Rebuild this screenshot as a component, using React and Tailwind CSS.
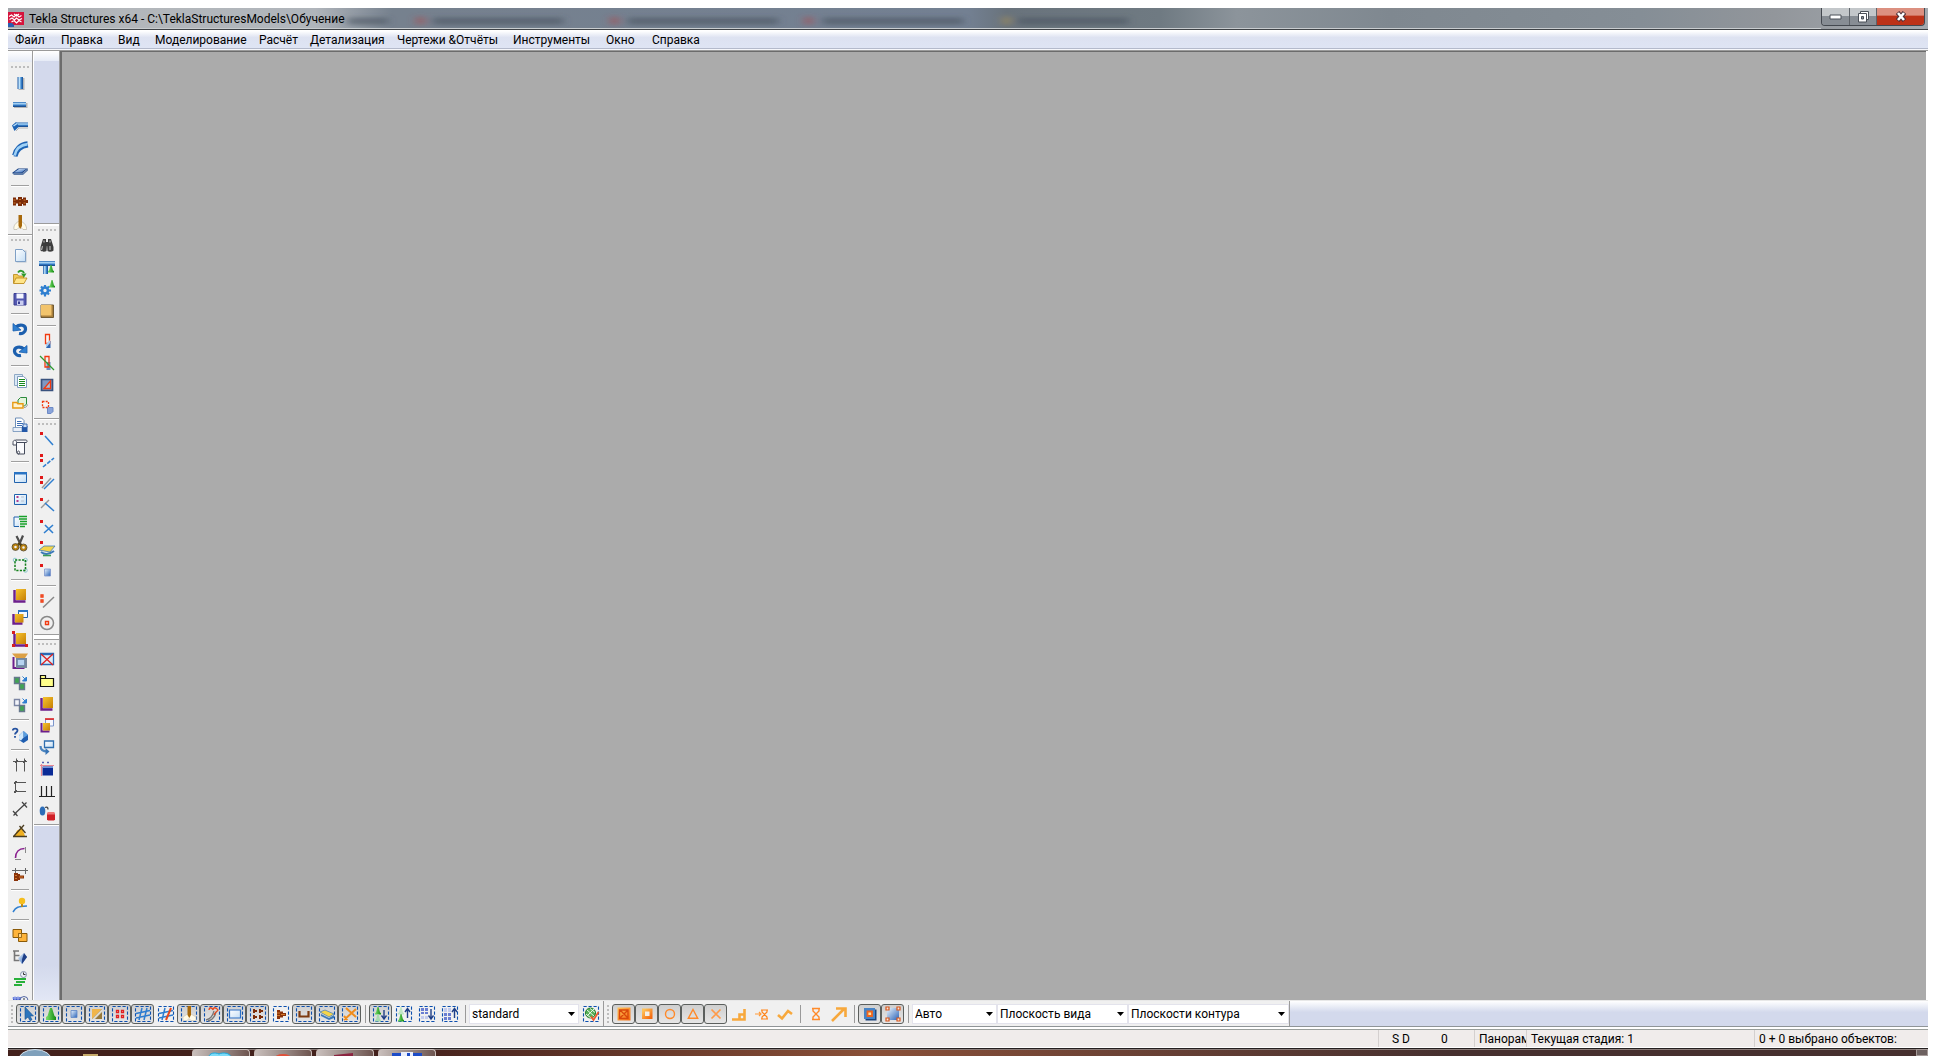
import React from "react";

const BLUE = "#2f7fd0";
const NAVY = "#1f3f86";

/* ---------- shared drawing pieces ---------- */

const Gradients = () => (
  <svg width="0" height="0" className="absolute" aria-hidden="true">
    <defs>
      <linearGradient id="steel" x1="0" x2="1" y1="0" y2="0">
        <stop offset="0" stopColor="#1d5aa6" />
        <stop offset="0.35" stopColor="#c3e6fc" />
        <stop offset="0.65" stopColor="#3f8ad2" />
        <stop offset="1" stopColor="#154a90" />
      </linearGradient>
      <linearGradient id="steelV" x1="0" x2="0" y1="0" y2="1">
        <stop offset="0" stopColor="#2468b4" />
        <stop offset="0.35" stopColor="#b9e0fb" />
        <stop offset="0.6" stopColor="#3a84cf" />
        <stop offset="1" stopColor="#123f80" />
      </linearGradient>
      <linearGradient id="gold" x1="0" x2="1" y1="0" y2="1">
        <stop offset="0" stopColor="#f7c52e" />
        <stop offset="1" stopColor="#c67f05" />
      </linearGradient>
      <linearGradient id="blueBox" x1="0" x2="1" y1="0" y2="1">
        <stop offset="0" stopColor="#eaf5fe" />
        <stop offset="1" stopColor="#2a63b8" />
      </linearGradient>
      <linearGradient id="paper" x1="0" x2="1" y1="0" y2="1">
        <stop offset="0" stopColor="#ffffff" />
        <stop offset="1" stopColor="#c4def5" />
      </linearGradient>
      <linearGradient id="greenCone" x1="0" x2="1" y1="0" y2="0">
        <stop offset="0" stopColor="#7be06a" />
        <stop offset="1" stopColor="#128a12" />
      </linearGradient>
      <linearGradient id="fire" x1="0" x2="1" y1="0" y2="1">
        <stop offset="0" stopColor="#ffc45a" />
        <stop offset="1" stopColor="#f4690f" />
      </linearGradient>
    </defs>
  </svg>
);

const Cone = ({ x = 0, y = 0, fill = "url(#greenCone)" }) => (
  <path transform={`translate(${x} ${y})`} d="M3.5 0h1l1.5 5.5 1 .5v1.5H1V6l1-.5z" fill={fill} />
);

const RedDots = ({ pair }) => (
  <g fill="#e01818">
    <path d="M1 1h3v3h-3z" />
    {pair && <path d="M1 6h3v3h-3z" />}
  </g>
);

const GoldPlate = () => (
  <g>
    <path d="M2.5 3v11.500h11" fill="none" stroke="#6c1f8c" strokeWidth="2.4" />
    <path d="M4 2h10v11H4z" fill="url(#gold)" />
  </g>
);

const Bolt = ({ x = 0, y = 0 }) => (
  <g transform={`translate(${x} ${y})`}>
    <path d="M0 0h3v9H0zM3 1.500h3v6H3zM6 3h3v3H6z" fill="#8a3208" />
    <path d="M0 3h3M0 5.500h3M4 4.500h4" stroke="#d0782c" strokeWidth="1" />
  </g>
);

const Glass = ({ x, y }) => (
  <path
    transform={`translate(${x} ${y})`}
    d="M0 0h7M0 9h7M1 0v2L6 7v2M6 0v2L1 7v2"
    fill="none"
    stroke="#ff8418"
    strokeWidth="1.2"
  />
);

const DashBox = () => (
  <path d="M.5 .5h15v15H.5z" fill="none" stroke="#0b4fae" strokeWidth="1.1" strokeDasharray="3.2 1.8" />
);

/* ---------- icon drawings, 16 x 16 ---------- */

const icons = {
  column: (
    <g>
      <path d="M6.5 3h6v12h-6z" fill="#b5b5b5" />
      <path d="M5.5 2h5.5v12h-5.500z" fill="url(#steel)" />
    </g>
  ),
  beam: (
    <g>
      <path d="M2 6h13.500v5H2z" fill="#b5b5b5" />
      <path d="M1 5h13v5H1z" fill="url(#steelV)" />
    </g>
  ),
  polybeam: (
    <g>
      <path d="M6 9h10M4 12l3-3" stroke="#b5b5b5" />
      <path d="M4 3.500h12v4.500H6z" fill="url(#steelV)" />
      <path d="M0 6.500L4 3l3 4.500-4.500 4.500z" fill="#1d63b4" />
      <path d="M1.500 7L5 4.500" stroke="#b9e0fb" strokeWidth="1.500" />
    </g>
  ),
  curved: (
    <g fill="none">
      <path d="M3.500 15.500C4.500 9.500 9 5.500 16 4.500" stroke="#1d63b4" strokeWidth="4" />
      <path d="M2.500 14.500C3.500 8.500 8 4 15.500 3" stroke="#9fd2f7" strokeWidth="3" />
      <path d="M.8 14C2 7.500 7 2 15.500 1" stroke="#1d63b4" strokeWidth="1.300" />
    </g>
  ),
  plate: (
    <g>
      <path d="M0 10L6 5.500h10L10.500 10z" fill="#173f82" />
      <path d="M2 9.500L7 6h7L9.500 9.500z" fill="url(#blueBox)" />
      <path d="M0 10h10.500L16 5.500v2L11 12H2z" fill="#5f7ca8" />
    </g>
  ),
  bolts: (
    <g fill="#7c2c08">
      <path d="M1 4.500h3v8H1zM4 6.500h2v4H4zM6 4h4v9H6zM10 6h1v5h-1zM11 4.500h3v8h-3zM14 7h2v3h-2z" />
      <path d="M1.500 7h2M1.500 10h2M7 6.500h2M7 10h2M11.500 7h2M11.500 10h2" stroke="#d0782c" />
    </g>
  ),
  weld: (
    <g>
      <path d="M8 6C4 7 1 11 2 14.500h3l3-3 3 3h3.500C15 11 12 7 8 6z" fill="#fffbe9" stroke="#b9b4a6" strokeWidth=".7" />
      <path d="M6.500 0h3.500v11L8.200 14 6.500 11z" fill="#a8690a" />
    </g>
  ),
  newDoc: (
    <g>
      <path d="M4.500 3.500h10v12h-10z" fill="#b9c3ce" />
      <path d="M3.500 2.500h7l3 3v9h-10z" fill="url(#paper)" stroke="#7fa0c6" />
    </g>
  ),
  open: (
    <g>
      <path d="M1.500 5.500h4l1 1.500h5V14h-10z" fill="#f2ca55" stroke="#b98618" strokeWidth=".8" />
      <path d="M4 9H15l-3 5.500H1.500z" fill="#ffe58a" stroke="#b98618" strokeWidth=".8" />
      <path d="M6 3.500C8 1 11 1.500 12 4" fill="none" stroke="#2d9a2d" strokeWidth="2" />
      <path d="M9 4.500h5.500L12 8.500z" fill="#2d9a2d" />
    </g>
  ),
  save: (
    <g>
      <path d="M2 2.500h12v11.500H2z" fill="#5358b0" stroke="#3a3f92" />
      <path d="M4.500 2.500h7v5h-7z" fill="#f3f5ff" />
      <path d="M5 9.500h6.500V14H5z" fill="#c9cdf0" />
      <path d="M6 10.500h2V13H6z" fill="#3a3f92" />
    </g>
  ),
  undo: (
    <g fill="none" stroke="#1c5fae">
      <path d="M4 6C8 2.500 14 4 13.500 8.500 13.200 11.500 10 13 7 12.500" strokeWidth="3.200" />
      <path d="M1 2.500v7.500l8-1z" fill="#2f7fd0" strokeWidth=".8" />
    </g>
  ),
  redo: (
    <g fill="none" stroke="#1c5fae">
      <path d="M12 6C8 2.500 2 4 2.500 8.500 2.800 11.500 6 13 9 12.500" strokeWidth="3.200" />
      <path d="M15 2.500v7.500l-8-1z" fill="#2f7fd0" strokeWidth=".8" />
    </g>
  ),
  docList: (
    <g>
      <path d="M2.500 1.500h8v11h-8z" fill="#dbe9f6" stroke="#8fa9c6" />
      <path d="M5.500 3.500h6l3 2.500v8.500h-9z" fill="#fff" stroke="#7f9cbc" />
      <path d="M7 6.500h6M7 8.500h6M7 10.500h6M7 12.500h6" stroke="#17891c" strokeWidth="1.200" />
    </g>
  ),
  folders: (
    <g>
      <path d="M6 5l2.500-2.500h6V9l-2 2H6z" fill="#e3f4dc" stroke="#2c8a3c" />
      <path d="M.8 7.500h4l1 1.200H11V13H.8z" fill="#fff3cf" stroke="#e79a12" strokeWidth="1.400" />
      <path d="M12 12.500c2 0 3-1 3.500-3" stroke="#999" fill="none" />
    </g>
  ),
  printDoc: (
    <g>
      <path d="M3.500 1h6l2.500 2.500v9h-8.500z" fill="#fff" stroke="#6f8fb8" />
      <path d="M5 4.500h4.500M5 6.500h6M5 8.500h5" stroke="#3d6db3" />
      <path d="M1 10.500h9v4H1z" fill="#e8eef7" stroke="#6f8fb8" strokeWidth=".8" />
      <path d="M10 9h5.500v6H10z" fill="#2358a8" />
      <path d="M11 7h4v3.500h-4z" fill="#cfe0f3" stroke="#2358a8" strokeWidth=".8" />
    </g>
  ),
  scroll: (
    <g fill="#fbfbfd" stroke="#444a5a">
      <path d="M4.500 3.500h10c1-1 .5-2.500-.5-2.500H3.500M4.500 3.500V12c0 1 .3 3 1.500 3h6.500V3.500" />
      <path d="M1 3.500c0-3 3.500-3 3.500 0v2.500H1z" />
      <path d="M6.500 15c1.500 0 1.500-3 0-3S5 15 6.500 15" fill="none" />
    </g>
  ),
  window: (
    <g>
      <path d="M2.500 3.500h12v10h-12z" fill="url(#paper)" stroke="#2062ad" />
      <path d="M2 3h13v2.500H2z" fill="#2a74c4" />
    </g>
  ),
  windowDots: (
    <g>
      <path d="M2.500 3.500h12v10h-12z" fill="url(#paper)" stroke="#2062ad" />
      <path d="M4.500 5h2v2h-2zM4.500 9h2v2h-2z" fill="#b03a8c" />
      <path d="M9 6h3M9 10h3" stroke="#b4bfce" />
    </g>
  ),
  windowList: (
    <g>
      <path d="M2 4h9v9.500H2z" fill="url(#paper)" stroke="#2062ad" />
      <path d="M7 2.500h9v12H7z" fill="#f0f0f0" />
      <path d="M7 3.500h8M7 6h8M8 8.500h7M8 11h7M8 13.500h5" stroke="#17a02a" strokeWidth="1.300" />
    </g>
  ),
  scissors: (
    <g fill="none">
      <path d="M4.500 1L9 10M11 .5L7 10" stroke="#4c4c4c" strokeWidth="2.200" />
      <path d="M6 8l4 3" stroke="#5a420c" strokeWidth="2" />
      <circle cx="3.500" cy="12" r="2.300" stroke="#b8800c" strokeWidth="2" />
      <circle cx="11.500" cy="12.500" r="2.300" stroke="#b8800c" strokeWidth="2" />
      <circle cx="3.500" cy="12" r="3.500" stroke="#3c2c0c" strokeWidth=".7" />
      <circle cx="11.500" cy="12.500" r="3.500" stroke="#3c2c0c" strokeWidth=".7" />
    </g>
  ),
  dashedRegion: (
    <g fill="none">
      <circle cx="3" cy="3" r="1.800" stroke="#8fc8d0" />
      <circle cx="13.500" cy="13.500" r="1.800" stroke="#8fc8d0" />
      <circle cx="13.500" cy="3" r="1.800" stroke="#8fc8d0" />
      <path d="M3 3h10.500v10.500H3z" stroke="#13801a" strokeWidth="1.500" strokeDasharray="2.200 1.300" />
    </g>
  ),
  goldPlate: <GoldPlate />,
  goldWindow: (
    <g>
      <path d="M1.500 5v9.500h9" fill="none" stroke="#6c1f8c" strokeWidth="2.400" />
      <path d="M6.500 1.500h9v7h-9z" fill="#f4f9ff" stroke="#2062ad" />
      <path d="M6 1h10v2H6z" fill="#2a74c4" />
      <path d="M3 5h8.500v8.500H3z" fill="url(#gold)" />
    </g>
  ),
  goldNodes: (
    <g>
      <GoldPlate />
      <path d="M0 0h3v3H0zM0 13h3v3H0zM13 13h3v3h-3z" fill="#d81e1e" />
    </g>
  ),
  goldFrame: (
    <g>
      <path d="M1.500 4v11h11" fill="none" stroke="#6c1f8c" strokeWidth="2" />
      <path d="M0 .5h16l-3 4.500H4z" fill="#dca045" />
      <path d="M4 5h11v10H4z" fill="#76879c" />
      <path d="M5.500 6.500h7v6h-7z" fill="#b7d3f0" stroke="#5c7aa0" strokeWidth=".6" />
    </g>
  ),
  copyGreen: (
    <g>
      <path d="M2.500 2.500h5v6h-5z" fill="#3fa452" stroke="#66788c" strokeWidth="1.400" />
      <path d="M7.500 8.500h5v6h-5z" fill="#3fa452" stroke="#66788c" strokeWidth="1.400" />
      <path d="M10.500 1.500l3 3M14.500 2v4h-4z" stroke={BLUE} fill={BLUE} />
    </g>
  ),
  moveGreen: (
    <g>
      <path d="M2.500 2.500h5v6h-5z" fill="#f4f5fa" stroke="#7c86a4" strokeWidth="1.400" />
      <path d="M7.500 8.500h5v6h-5z" fill="#3fa452" stroke="#66788c" strokeWidth="1.400" />
      <path d="M10.500 1.500l3 3M14.500 2v4h-4z" stroke={BLUE} fill={BLUE} />
    </g>
  ),
  inquire: (
    <g>
      <path d="M.8 3.500C.8 1 5.500 1 5.500 3.500 5.500 5.500 3 5.500 3 7.500M3 9v1.800" fill="none" stroke="#2552a0" strokeWidth="1.800" />
      <path d="M7 8.500L11.500 4 16 8v5l-4.500 3L7 13z" fill="#1f5eb0" />
      <path d="M7 8.500L11.500 4v6.500L9 13.500l-2-1z" fill="#cfe8fb" />
      <path d="M11.500 4L16 8l-4 2.500z" fill="#5a9fe0" />
    </g>
  ),
  dimX: (
    <g stroke="#555" fill="none">
      <path d="M1 4.500h14M4.500 1.500v13M12.500 1.500v13" />
      <path d="M3 6l3-3M11 6l3-3" />
    </g>
  ),
  dimY: (
    <g stroke="#555" fill="none">
      <path d="M3.500 2v12M2 3.500h12M2 12.500h12" />
      <path d="M2 5l3-3M2 14l3-3" />
    </g>
  ),
  dimFree: (
    <g stroke="#444" fill="none">
      <path d="M3 12.500L12.500 3.500M1 10l4.500 5M10 1l5 5.500M11 5l3.500-3.500M1.500 14.500l3-3" strokeWidth="1.200" />
    </g>
  ),
  angle: (
    <g>
      <path d="M5 7.500l5-2.500L13 13H2.500z" fill="#f0b020" />
      <path d="M1 13.500h14M1.500 13.500L12 2M7.500 3l6 7" stroke="#4a3c20" fill="none" strokeWidth="1.300" />
    </g>
  ),
  arcDim: (
    <g fill="none">
      <path d="M3.500 13C3.500 7 7 3.500 12.500 3.500" stroke="#8a1f8f" strokeWidth="1.600" />
      <path d="M13.500 2v6M3 14.500h6" stroke="#888" />
    </g>
  ),
  boltDim: (
    <g>
      <path d="M0 3.500h16M3.500 1v13M13.500 1v6" stroke="#666" fill="none" />
      <path d="M2 6h4v8H2zM6 7h2v6H6zM8 8.500h4v3H8z" fill="#8a3208" />
      <path d="M3 8.500h2M3 11.500h2M7 10h4" stroke="#d0782c" />
    </g>
  ),
  pin: (
    <g>
      <path d="M1 15c3-5 5-5.500 14-6" stroke={BLUE} strokeWidth="1.500" fill="none" />
      <path d="M9 6h2v4H9z" fill="#b98618" />
      <circle cx="10" cy="4" r="3.200" fill="#f5be1d" />
    </g>
  ),
  overlap: (
    <g stroke="#8a5a08">
      <path d="M1 2.500h8.500v8H1z" fill="#ffb43a" />
      <path d="M6.500 6.500h8.500v8H6.500z" fill="#ffb43a" />
      <path d="M6.500 6.500h3v4h-3z" fill="#ffd890" strokeWidth=".8" />
    </g>
  ),
  tree: (
    <g>
      <path d="M1 2h6M2.500 2v9.500h5M2.500 6.500h5" stroke="#777" strokeWidth="1.600" fill="none" />
      <path d="M6 9l6-5 3 4-5 7z" fill="url(#blueBox)" />
      <path d="M12 4l3 4-5 7v-4.500z" fill={NAVY} />
    </g>
  ),
  schedule: (
    <g>
      <path d="M2 8h12M4 11h9M2 14h8" stroke="#28b03a" strokeWidth="2" />
      <circle cx="11.500" cy="3.500" r="3" fill="#edf1f8" stroke="#8a94ad" />
      <path d="M11.500 1.500v2h2" stroke="#333" fill="none" />
    </g>
  ),
  filmClock: (
    <g>
      <path d="M1 4h8v7H1z" fill="#3c55c8" />
      <path d="M0 5h9M3 3v9M6 3v9" stroke="#a4b4ee" />
      <circle cx="12" cy="7.500" r="4" fill="#edf1f8" stroke="#5568a0" />
      <path d="M12 5v2.500h2" stroke="#333" fill="none" />
    </g>
  ),
  binoculars: (
    <g fill="#3d3d3d">
      <path d="M4 2h3v3l1 2-.5 7C6 15 3 15 1.500 13.500V10z" />
      <path d="M12 2H9v3L8 7l.5 7c1.500 1 4.500 1 6-.5V10z" />
      <path d="M6.500 5h3v4h-3z" />
      <path d="M3.500 9l-1 4M11 9v4M5 3.500v2M11 3.500v2" stroke="#b4b4b4" strokeWidth="1.200" />
    </g>
  ),
  frameCone: (
    <g>
      <path d="M0 2h16v5H0z" fill="url(#steelV)" />
      <path d="M4 7h5v8H4z" fill="url(#steel)" />
      <Cone x={8} y={6} />
    </g>
  ),
  gearCone: (
    <g>
      <circle cx="6" cy="9.500" r="3" fill="none" stroke="#2f7fd0" strokeWidth="2.600" />
      <path d="M6 4v2M6 13v2.500M.5 9.500h2M9.500 9.500h2.500M2 5.500L3.500 7M8.500 12l1.500 1.500M10 5.500L8.500 7M2 13.500L3.500 12" stroke="#2f7fd0" strokeWidth="2.200" />
      <Cone x={9} y={-1} />
    </g>
  ),
  goldTile: (
    <g>
      <path d="M2 2h12.500v12.500H2z" fill="#a87f3c" stroke="#6f5a34" />
      <path d="M2 2h10.500v10.500H2z" fill="#f2c46c" />
    </g>
  ),
  columnRed: (
    <g>
      <path d="M7 8h4.500v7H7z" fill="#2d66b4" />
      <path d="M6.500 1.500h4v9h-4z" fill="#f4f4f4" stroke="#f03a10" strokeWidth="1.300" />
      <path d="M7 15V11l4-4v3z" fill="#a8cdf0" />
    </g>
  ),
  columnCut: (
    <g fill="none">
      <path d="M7.500 7h4v8h-4z" fill="#6c8cc0" />
      <path d="M6 1.500h4V12H6z" stroke="#f03a10" strokeWidth="1.300" />
      <path d="M1 1l14 14" stroke="#2f9a2f" strokeWidth="1.300" />
    </g>
  ),
  redTriangle: (
    <g>
      <path d="M2.500 2.500h11v11h-11z" fill="#7f98c2" stroke="#39527e" strokeWidth="1.700" />
      <path d="M5 11.500L11.500 4v7.500z" fill="#a9bddb" stroke="#f03a10" strokeWidth="1.300" />
    </g>
  ),
  dashedRed: (
    <g>
      <path d="M8.500 8.500h5.500V12.500l-2 2H8.500z" fill="#8aa4da" stroke="#6d8ac6" />
      <path d="M3.500 2.500h6v6h-6z" fill="#f4f4f4" stroke="#f03a10" strokeWidth="1.300" strokeDasharray="2 1.200" />
    </g>
  ),
  ptLine: (
    <g>
      <RedDots />
      <path d="M6 5l8 9" stroke={BLUE} strokeWidth="1.500" />
    </g>
  ),
  ptDash: (
    <g>
      <RedDots pair />
      <path d="M4 14l11-9" stroke={BLUE} strokeWidth="1.600" strokeDasharray="4 1.500" />
    </g>
  ),
  ptParallel: (
    <g>
      <RedDots pair />
      <path d="M3 13L12 3" stroke="#999" strokeWidth="1.500" />
      <path d="M5 14L15 4" stroke={BLUE} strokeWidth="1.500" />
    </g>
  ),
  ptCross: (
    <g>
      <RedDots />
      <path d="M2 11l8-8" stroke="#999" strokeWidth="1.500" />
      <path d="M6 6l9 8" stroke={BLUE} strokeWidth="1.500" />
    </g>
  ),
  ptX: (
    <g>
      <RedDots />
      <path d="M5 14l9-8M6 6l8 8" stroke={BLUE} strokeWidth="1.600" />
    </g>
  ),
  ptPlane: (
    <g>
      <path d="M0 9l5-4h11l-5 6z" fill="#f5d548" stroke="#3b79b8" strokeWidth=".8" />
      <path d="M2 11c4 3 9 2 13-1" stroke="#3b79b8" strokeWidth="2" fill="none" />
      <path d="M4 14.500h8" stroke="#3b9a58" strokeWidth="1.600" />
      <path d="M1 0h3v3h-3z" fill="#e01818" />
    </g>
  ),
  ptBox: (
    <g>
      <path d="M1 1h3v3h-3z" fill="#e01818" />
      <path d="M5.500 6h6v7h-6z" fill="url(#blueBox)" stroke="#7d96cb" strokeWidth=".8" />
    </g>
  ),
  conLine: (
    <g fill="none">
      <path d="M4 14.500L15 4" stroke="#888" strokeWidth="1.500" />
      <path d="M2 2h2v2H2zM2 7h2v2H2z" stroke="#f03a10" strokeWidth="1.300" />
    </g>
  ),
  conCircle: (
    <g fill="none">
      <circle cx="8" cy="8" r="6.500" stroke="#888" strokeWidth="1.500" />
      <path d="M6.500 6.500h3v3h-3z" stroke="#f03a10" strokeWidth="1.400" />
    </g>
  ),
  noWindow: (
    <g>
      <path d="M1.500 2.500h13v11h-13z" fill="#dcebf8" stroke="#2a6ab4" strokeWidth="1.300" />
      <path d="M1.500 3.200h13" stroke="#2a6ab4" strokeWidth="2" />
      <path d="M2 3l12 11M14 3L2 14" stroke="#e02020" strokeWidth="1.300" />
    </g>
  ),
  folderYellow: (
    <g fill="#ffff8a" stroke="#111" strokeWidth="1.200">
      <path d="M1.500 5.500h13v8h-13z" />
      <path d="M1.500 5.500v-3h5v3z" />
    </g>
  ),
  goldRedWin: (
    <g>
      <path d="M2.500 6v8.500h8" fill="none" stroke="#6c1f8c" strokeWidth="2" />
      <path d="M6.500 2.500h8v6.500h-8z" fill="#f6f8ff" stroke="#7d96cb" />
      <path d="M6 2h9" stroke="#e02020" strokeWidth="1.600" />
      <path d="M4 6h7v7.500H4z" fill="url(#gold)" />
    </g>
  ),
  swapWin: (
    <g>
      <path d="M5.500 2h9v6.500h-9z" fill="url(#paper)" stroke="#2f6fb0" strokeWidth="1.300" />
      <path d="M1.500 7c0 4 3 5.500 7 5.500" fill="none" stroke="#4b84be" strokeWidth="2.200" />
      <path d="M6.500 9l4 3.500-4 3.500z" fill="#3774b5" />
    </g>
  ),
  navyWin: (
    <g>
      <path d="M3.500 5.500h10.500v9h-10.500z" fill="#0b2b96" />
      <path d="M1 4.500h14M2.500 3v12" stroke="#e78795" strokeWidth="1.200" />
      <path d="M3 1.500h2M8 1.500h2" stroke="#5560b0" strokeWidth="1.500" />
      <path d="M4 6.500h10" stroke="#6f92e0" />
    </g>
  ),
  grid: <path d="M2.500 3v10M7.500 3v10M12.500 3v10M0 13.500h16" stroke="#222" strokeWidth="1.200" />,
  cylinders: (
    <g>
      <ellipse cx="3.500" cy="6" rx="2.800" ry="4.500" fill="#2d6db8" />
      <path d="M6 2.500c2-1 3 0 3 2" stroke="#444" fill="none" strokeWidth="1.300" />
      <path d="M8 8h8v6.500l-1 1H9l-1-1z" fill="#cf2027" />
      <path d="M8 8l1-1h6l1 1v1.500H8z" fill="#ee7a7a" />
    </g>
  ),

  /* selection switches */
  selArrow: (
    <path d="M5 1l8.500 9H10l2 3.700-2 1-2-3.700-3 2.500z" fill="#2b75bd" stroke="#17518f" strokeWidth=".6" />
  ),
  selCone: <path d="M7 2h2l2.500 8 1.500 1v3h-10v-3l1.500-1z" fill="url(#greenCone)" />,
  selCube: <path d="M5 4.500h6v7H5z" fill="url(#blueBox)" stroke="#5d86c8" strokeWidth=".8" />,
  selSurface: (
    <g>
      <path d="M3 3h10v10H3z" fill="#6b5a3a" />
      <path d="M3 3h10L3 13z" fill="#f0b548" />
      <path d="M3 13L13 3v10z" fill="#dfdacb" />
      <path d="M6 13l7-7v7z" fill="#96783a" />
    </g>
  ),
  selPoints: (
    <path d="M4.500 4.500h2v2h-2zM9.500 4.500h2v2h-2zM4.500 9.500h2v2h-2zM9.500 9.500h2v2h-2z" fill="#fff" stroke="#e02020" strokeWidth="1.300" />
  ),
  selGrid: <path d="M1 7.500l14-3M1 12l14-3M7 2L4 14M12 2L9 14" stroke="#2c7cd0" strokeWidth="1.500" />,
  selGridLine: (
    <g>
      <path d="M1 7.500l14-3M1 12l14-3M7 2L4 14" stroke="#2c7cd0" strokeWidth="1.500" />
      <path d="M13 2L8 14" stroke="#e8481c" strokeWidth="2" />
    </g>
  ),
  selWeld: (
    <g>
      <path d="M8 7L2 11v3.500h4l2-2 2 2h5v-3.500z" fill="#fffbe9" stroke="#c9c3b2" strokeWidth=".6" />
      <path d="M6.500 0H10v9l-1.700 3-1.800-3z" fill="#a8690a" />
    </g>
  ),
  selRebar: (
    <g fill="none" strokeWidth="1.300">
      <path d="M2 14c5-1 7-5 8-9M4 15c5-1 7-5 8-9" stroke="#777" />
      <path d="M5 4c0-3 3-3 4 0M9 4c0-3 3-3 5 0-1 2-3 2-4 5" stroke="#e8481c" />
    </g>
  ),
  selPour: <path d="M2.500 4h11v8h-11z" fill="url(#paper)" stroke="#2c6fc4" strokeWidth="1.200" />,
  selBolts: (
    <path
      d="M3 3h2v4H3zM5 4h2v2H5zM9 3h2v4H9zM11 4h2v2h-2zM3 9h2v4H3zM5 10h2v2H5zM9 9h2v4H9zM11 10h2v2h-2z"
      fill="#7c2c08"
    />
  ),
  selBolt: <Bolt x={4} y={4} />,
  selStirrup: <path d="M3.500 5v5.500h9V5" fill="none" stroke="#7c3a10" strokeWidth="2.200" />,
  selLayers: (
    <g>
      <path d="M2 8l8 4 5-3v3l-5 2-8-4z" fill="#3b79b8" />
      <path d="M1 6l5-2 9 4-5 3z" fill="#f5d548" stroke="#3b79b8" strokeWidth=".7" />
    </g>
  ),
  selDistance: (
    <path d="M2 14L14 3M4 2l10 9M2 10l3.500 4" stroke="#f08c1c" strokeWidth="2" fill="none" />
  ),
  lvlConeDown: (
    <g>
      <Cone x={1} y={1} />
      <Cone x={1} y={8} fill="#a9dcb0" />
      <path d="M11 4v8M8.500 9.500L11 13l2.500-3.500" stroke={NAVY} strokeWidth="1.400" fill="none" />
    </g>
  ),
  lvlConeUp: (
    <g>
      <Cone x={1} y={1} fill="#bfe6c4" />
      <Cone x={1} y={8} />
      <path d="M11.500 12V3M9 6l2.500-3.500L14 6" stroke={NAVY} strokeWidth="1.400" fill="none" />
    </g>
  ),
  lvlBoxDown: (
    <g>
      <path d="M2 2h3v3H2zM6 2h3v3H6zM2 6h3v2H2zM6 6h3v2H6z" fill="#6a7ed2" />
      <path d="M2 10h3v3H2zM6 10h3v3H6z" fill="#c3cbee" />
      <path d="M12 3v9M9.500 9.500L12 13l2.500-3.500" stroke={NAVY} strokeWidth="1.400" fill="none" />
    </g>
  ),
  lvlBoxUp: (
    <g>
      <path d="M2 2h3v4H2zM6 2h3v4H6z" fill="#c3cbee" />
      <path d="M2 7h3v3H2zM6 7h3v3H6zM2 11h3v3H2zM6 11h3v3H6z" fill="#6a7ed2" />
      <path d="M12.500 12V3M10 6l2.500-3.500L15 6" stroke={NAVY} strokeWidth="1.400" fill="none" />
    </g>
  ),
  filter: (
    <g fill="none">
      <circle cx="7.500" cy="7" r="5" fill="#58b058" stroke="#1e7a28" />
      <path d="M4 4l7 6M3 8l5 4M7 2.500l5 4M11 3L4 10" stroke="#e8f6e8" />
      <path d="M8 10.500l2.500 3.500L15.500 6" stroke="#f0582c" strokeWidth="1.700" />
    </g>
  ),

  /* snap switches */
  snapPoints: (
    <g>
      <path d="M1.500 1.500h13v13h-13z" fill="url(#fire)" />
      <path d="M3.500 4h8.500v8.500H3.500zM4 4l8 8M12 4l-8 8" fill="none" stroke="#d9480a" strokeWidth="1.400" />
    </g>
  ),
  snapEnd: <path d="M4.500 4h7.500v7.500H4.500z" fill="#f3efe8" stroke="url(#fire)" strokeWidth="3" />,
  snapCenter: <circle cx="8" cy="8" r="4.500" fill="none" stroke="#ff8a2a" strokeWidth="1.400" />,
  snapMid: <path d="M8 3.500L12.700 12.300H3.300z" fill="none" stroke="#ff8a2a" strokeWidth="1.400" />,
  snapCross: <path d="M3.500 3.500l9 9M12.500 3.500l-9 9" stroke="#ff9a48" strokeWidth="1.700" />,
  snapPerp: <path d="M1 13.500h12.500V3M8.500 13V8.500h5" fill="none" stroke="#f7a83c" strokeWidth="2.600" />,
  snapExt: (
    <g>
      <path d="M1 8h6M5 6l2 2-2 2" fill="none" stroke="#ff9a38" strokeWidth="1.200" />
      <Glass x={7} y={4} />
    </g>
  ),
  snapAny: <path d="M1 9l4 3.500L11 5l4 3" fill="none" stroke="#f7a83c" strokeWidth="2.600" />,
  snapNear: (
    <path
      d="M4 2.500h8M4 13.500h8M5 3v2l6 6v2.500M11 3v2l-6 6v2.500"
      fill="none"
      stroke="#ff8a2a"
      strokeWidth="1.400"
    />
  ),
  snapLine: <path d="M1 15L13 3M5 2.500h9.500V11" fill="none" stroke="#f7a83c" strokeWidth="2.600" />,
  snapGeom: (
    <g>
      <path d="M3.500 3.500h11v11h-11z" fill="#1b437c" />
      <path d="M2 2h11v11H2z" fill="#4683c6" />
      <path d="M5.500 5.500h4.500v4.500H5.500z" fill="#ffe2a0" stroke="#f0641c" strokeWidth="1.800" />
    </g>
  ),
  snapRef: (
    <g>
      <path d="M2 2h12v12H2z" fill="url(#blueBox)" />
      <path d="M1 1h3v3H1zM12 1h3v3h-3zM1 12h3v3H1zM12 12h3v3h-3z" fill="#f4e6dc" stroke="#d8561c" strokeWidth="1.200" />
    </g>
  ),
};

const Icon = ({ name, dashed }) => (
  <svg width="16" height="16" viewBox="0 0 16 16" className="shrink-0 overflow-visible" aria-hidden="true">
    {dashed && <DashBox />}
    {icons[name]}
  </svg>
);

/* ---------- toolbars ---------- */

const GripRow = ({ tall }) => (
  <div
    className={
      tall
        ? "flex h-2.5 shrink-0 items-center justify-center gap-0.5"
        : "flex h-2 shrink-0 items-center justify-center gap-0.5"
    }
  >
    {[0, 1, 2, 3, 4].map((i) => (
      <span key={i} className="size-0.5 bg-[#bdbdbd]" />
    ))}
  </div>
);

const VerticalTool = ({ name, label }) => (
  <button type="button" aria-label={label} className="flex h-[22px] w-full shrink-0 items-center justify-center">
    <Icon name={name} />
  </button>
);

const VerticalBar = ({ items, tallGrip, flush }) => (
  <div
    role="toolbar"
    aria-orientation="vertical"
    className={
      flush
        ? "flex shrink-0 flex-col bg-[#f0f0f0]"
        : "flex shrink-0 flex-col border-b border-[#9c9c9c] bg-[#f0f0f0] shadow-[0_1px_0_#ffffff]"
    }
  >
    <GripRow tall={tallGrip} />
    {items.map(([name, label], i) =>
      name === "|" ? (
        <div key={i} className="flex h-2 shrink-0 items-center px-[3px]">
          <div className="h-0.5 w-full border-t border-[#a0a0a0] bg-white" />
        </div>
      ) : (
        <VerticalTool key={i} name={name} label={label} />
      )
    )}
  </div>
);

const createBar = [
  ["column", "Колонна"],
  ["beam", "Балка"],
  ["polybeam", "Составная балка"],
  ["curved", "Изогнутая балка"],
  ["plate", "Пластина"],
  ["|"],
  ["bolts", "Болты"],
  ["weld", "Сварка"],
];

const standardBar = [
  ["newDoc", "Создать"],
  ["open", "Открыть"],
  ["save", "Сохранить"],
  ["|"],
  ["undo", "Отменить"],
  ["redo", "Вернуть"],
  ["|"],
  ["docList", "Отчёты"],
  ["folders", "Список чертежей"],
  ["printDoc", "Печать чертежей"],
  ["scroll", "Макросы"],
  ["|"],
  ["window", "Вид"],
  ["windowDots", "Вид по двум точкам"],
  ["windowList", "Список видов"],
  ["scissors", "Плоскость отсечения"],
  ["dashedRegion", "Рабочая область"],
  ["|"],
  ["goldPlate", "Рабочая плоскость"],
  ["goldWindow", "Рабочая плоскость вида"],
  ["goldNodes", "Рабочая плоскость по точкам"],
  ["goldFrame", "Рабочая плоскость детали"],
  ["copyGreen", "Копировать"],
  ["moveGreen", "Переместить"],
  ["|"],
  ["inquire", "Запросить объект"],
  ["|"],
  ["dimX", "Размер по X"],
  ["dimY", "Размер по Y"],
  ["dimFree", "Свободный размер"],
  ["angle", "Угол"],
  ["arcDim", "Дуга"],
  ["boltDim", "Расстояние между болтами"],
  ["|"],
  ["pin", "Точка"],
  ["|"],
  ["overlap", "Контроль столкновений"],
  ["tree", "Диспетчер модели"],
  ["schedule", "Диспетчер задач"],
  ["filmClock", "Визуализация хода проекта"],
];

const detailBar = [
  ["binoculars", "Найти компонент"],
  ["frameCone", "Соединение"],
  ["gearCone", "Автосоединение"],
  ["goldTile", "Поверхность"],
  ["|"],
  ["columnRed", "Подгонка"],
  ["columnCut", "Вырез линией"],
  ["redTriangle", "Вырез многоугольником"],
  ["dashedRed", "Вырез деталью"],
];

const pointsBar = [
  ["ptLine", "Точки вдоль линии"],
  ["ptDash", "Точки на продолжении"],
  ["ptParallel", "Параллельные точки"],
  ["ptCross", "Проекция точки"],
  ["ptX", "Точка пересечения"],
  ["ptPlane", "Точка на плоскости"],
  ["ptBox", "Точка на детали"],
  ["|"],
  ["conLine", "Вспомогательная линия"],
  ["conCircle", "Вспомогательная окружность"],
];

const viewsBar = [
  ["noWindow", "Закрыть вид"],
  ["folderYellow", "Папка"],
  ["goldPlate", "Плоскость"],
  ["goldRedWin", "Плоскость вида"],
  ["swapWin", "Переключить вид"],
  ["navyWin", "Окно"],
  ["grid", "Сетка"],
  ["cylinders", "Объекты"],
];

const Toggle = ({ name, label, dashed, on = true }) => (
  <button
    type="button"
    aria-label={label}
    aria-pressed={on}
    className={
      on
        ? "flex h-5 w-[23px] shrink-0 items-center justify-center rounded-[3px] border border-[#5b5f5d] bg-linear-to-b from-[#cfcfcf] to-[#e6e6e6]"
        : "flex h-5 w-[23px] shrink-0 items-center justify-center"
    }
  >
    <Icon name={name} dashed={dashed} />
  </button>
);

const selectionSwitches = [
  ["selArrow", "Все", true],
  ["selCone", "Компоненты", true],
  ["selCube", "Детали", true],
  ["selSurface", "Поверхности", true],
  ["selPoints", "Точки", true],
  ["selGrid", "Сетки", true],
  ["selGridLine", "Линии сетки", false],
  ["selWeld", "Сварные швы", true],
  ["selRebar", "Арматура", true],
  ["selPour", "Виды", true],
  ["selBolts", "Группы болтов", true],
  ["selBolt", "Одиночные болты", false],
  ["selStirrup", "Стержни", true],
  ["selLayers", "Плоскости", true],
  ["selDistance", "Расстояния", true],
];

const levelSwitches = [
  ["lvlConeDown", "Выбор компонентов", true],
  ["lvlConeUp", "Объекты в компонентах", false],
  ["lvlBoxDown", "Выбор сборок", false],
  ["lvlBoxUp", "Объекты в сборках", false],
];

const snapSwitches = [
  ["snapPoints", "К точкам", true],
  ["snapEnd", "К конечным точкам", true],
  ["snapCenter", "К центрам", true],
  ["snapMid", "К средним точкам", true],
  ["snapCross", "К пересечениям", true],
  ["snapPerp", "К перпендикулярам", false],
  ["snapExt", "К продолжениям", false],
  ["snapAny", "К любым положениям", false],
];

const BarRule = () => (
  <div className="flex w-2 shrink-0 justify-center">
    <div className="h-[18px] w-px bg-[#9a9a9a]" />
  </div>
);

const GripColumn = () => (
  <div className="flex w-2 shrink-0 flex-col items-center gap-0.5">
    {[0, 1, 2, 3, 4].map((i) => (
      <span key={i} className="size-0.5 bg-[#bdbdbd]" />
    ))}
  </div>
);

const Combo = ({ label, value, width }) => (
  <div className={`relative shrink-0 ${width}`}>
    <select
      aria-label={label}
      defaultValue={value}
      className="block h-5 w-full appearance-none border border-[#e3e3ec] bg-white pl-0.5 text-xs leading-4 text-black outline-none"
    >
      <option>{value}</option>
    </select>
    <svg
      width="7"
      height="4"
      viewBox="0 0 7 4"
      className="pointer-events-none absolute top-2 right-1"
      aria-hidden="true"
    >
      <path d="M0 0h7L3.500 4z" fill="#000" />
    </svg>
  </div>
);

/* ---------- window frame ---------- */

const TitleGlass = () => (
  <svg
    className="absolute inset-0 size-full"
    preserveAspectRatio="none"
    viewBox="0 0 1920 20"
    aria-hidden="true"
  >
    <defs>
      <linearGradient id="glass" x1="0" x2="1" y1="0" y2="0">
        <stop offset="0" stopColor="#a4a8ad" />
        <stop offset="0.06" stopColor="#b3b7bb" />
        <stop offset="0.16" stopColor="#b0b5bb" />
        <stop offset="0.2" stopColor="#76818e" />
        <stop offset="0.5" stopColor="#738092" />
        <stop offset="0.52" stopColor="#69737c" />
        <stop offset="0.6" stopColor="#6f7a82" />
        <stop offset="0.64" stopColor="#8c949b" />
        <stop offset="0.72" stopColor="#7f8890" />
        <stop offset="0.85" stopColor="#858e96" />
        <stop offset="0.92" stopColor="#92969b" />
        <stop offset="1" stopColor="#a3a9af" />
      </linearGradient>
      <filter id="soft" x="-20%" y="-100%" width="140%" height="300%">
        <feGaussianBlur stdDeviation="4 2" />
      </filter>
    </defs>
    <path d="M0 0h1920v20H0z" fill="url(#glass)" />
    <g filter="url(#soft)">
      <path
        d="M425 9h130v7H425zM620 9h150v7H620zM815 9h140v7H815zM1010 9h110v7h-110zM340 9h40v7h-40z"
        fill="#4b5663"
        opacity=".6"
      />
      <path d="M408 8h9v8h-9zM602 8h9v8h-9zM796 8h9v8h-9z" fill="#a84a52" opacity=".55" />
      <path d="M994 8h9v8h-9z" fill="#a08c5c" opacity=".6" />
    </g>
  </svg>
);

const AppLogo = () => (
  <svg width="16" height="16" viewBox="0 0 16 16" className="shrink-0" aria-hidden="true">
    <path d="M0 12h6v4H0z" fill="#2a5fb0" />
    <path d="M0 1h16v13H6l-2-2H0z" fill="#d5143c" />
    <g fill="none" stroke="#fff" strokeWidth="1.200">
      <path d="M1 5.500L3.500 4 6 6 8.500 3.500 11 6l2.500-1.500M1.500 8.500L4 7l2.500 2L8.500 7 11 9l3-1.500M3.500 11L6 9.500 8.500 12 11 9.500l2.500 1.500" />
      <path d="M6 3l2.500 2L11 3" />
    </g>
  </svg>
);

const TitleBar = () => (
  <header className="relative flex h-[22px] shrink-0 items-start border-b border-[#3f4347]">
    <TitleGlass />
    <div className="relative flex h-full flex-1 items-center gap-[5px] shadow-[inset_0_-1px_0_#c9cdd0]">
      <AppLogo />
      <h1 className="text-xs leading-4 text-black">
        Tekla Structures x64 - C:\TeklaStructuresModels\Обучение
      </h1>
    </div>
    <div className="relative mr-[3px] flex h-[18px] overflow-hidden rounded-b border border-t-0 border-[#43484f] text-white">
      <button
        type="button"
        aria-label="Свернуть"
        className="flex w-7 items-center justify-center border-r border-[#5e6369] bg-linear-to-b from-[#c3c7ca] from-45% to-[#878d94] to-50%"
      >
        <svg width="13" height="6" viewBox="0 0 13 6" aria-hidden="true">
          <path d="M1 1h11v4H1z" fill="#fff" stroke="#4b5058" />
        </svg>
      </button>
      <button
        type="button"
        aria-label="Восстановить"
        className="flex w-[27px] items-center justify-center border-r border-[#5e6369] bg-linear-to-b from-[#c3c7ca] from-45% to-[#878d94] to-50%"
      >
        <svg width="13" height="12" viewBox="0 0 13 12" aria-hidden="true">
          <path d="M3.500 .5h8v8h-8z" fill="#fff" stroke="#4b5058" />
          <path d="M1.500 2.500h8v8.500h-8z" fill="#fff" stroke="#4b5058" />
          <path d="M4.500 5.500h2v2.500h-2z" fill="#878d94" stroke="#4b5058" />
        </svg>
      </button>
      <button
        type="button"
        aria-label="Закрыть"
        className="flex w-[47px] items-center justify-center bg-linear-to-b from-[#dc9080] from-40% to-[#bd3218] to-50%"
      >
        <svg width="12" height="11" viewBox="0 0 12 11" aria-hidden="true">
          <path d="M2.500 1.500l7 8M9.500 1.500l-7 8" stroke="#4b3038" strokeWidth="4.600" />
          <path d="M3 2l6 7M9 2l-6 7" stroke="#fff" strokeWidth="2.600" />
        </svg>
      </button>
    </div>
  </header>
);

const menus = [
  ["Файл", "w-[46px]"],
  ["Правка", "w-[57px]"],
  ["Вид", "w-[37px]"],
  ["Моделирование", "w-[104px]"],
  ["Расчёт", "w-[51px]"],
  ["Детализация", "w-[87px]"],
  ["Чертежи &Отчёты", "w-[116px]"],
  ["Инструменты", "w-[93px]"],
  ["Окно", "w-[46px]"],
  ["Справка", "w-[60px]"],
];

const MenuBar = () => (
  <nav className="flex h-5 shrink-0 items-start border-b border-[#f5f6fa] bg-linear-to-b from-white from-5% via-[#dde2f1] via-40% to-[#dfe5f4] pl-[7px] shadow-[inset_0_-1px_0_#b4bacb]">
    {menus.map(([label, width]) => (
      <button
        key={label}
        type="button"
        className={`shrink-0 pt-0.5 text-left text-xs leading-4 whitespace-nowrap text-black ${width}`}
      >
        {label}
      </button>
    ))}
  </nav>
);

const StatusBar = () => (
  <footer className="flex h-[17px] shrink-0 bg-[#f0eceb] text-xs leading-[18px] text-black">
    <div className="flex-1" />
    <div className="flex w-24 shrink-0 border-l border-[#d4d0cf] pl-[13px]">
      <span className="w-[49px]">S D</span>
      <span>0</span>
    </div>
    <div className="w-[52px] shrink-0 overflow-hidden border-l border-[#d4d0cf] pl-1 whitespace-nowrap">
      Панорам
    </div>
    <div className="w-[228px] shrink-0 border-l border-[#d4d0cf] pl-1">Текущая стадия: 1</div>
    <div className="w-[174px] shrink-0 border-l border-[#d4d0cf] pl-1">0 + 0 выбрано объектов:</div>
  </footer>
);

const TaskButton = ({ children }) => (
  <div className="flex w-[58px] shrink-0 justify-center overflow-hidden rounded-t-sm border border-b-0 border-[#c9bdb9] bg-linear-to-r from-[#c9bfbc] via-[#9c8e8a] to-[#6e5550]">
    <svg width="36" height="7" viewBox="0 0 36 7" aria-hidden="true">
      {children}
    </svg>
  </div>
);

const Taskbar = () => (
  <div className="flex h-2 shrink-0 border-t border-[#252020] bg-linear-to-r from-[#43211c] from-20% via-[#8a5038] via-45% to-[#46302f] to-75% shadow-[inset_0_1px_0_#8d7f7c]">
    <svg width="184" height="7" viewBox="0 0 184 7" aria-hidden="true">
      <ellipse cx="27" cy="12" rx="17" ry="11.500" fill="#7fa0bb" stroke="#d5e2ec" />
      <path d="M75 5h15v2H75z" fill="#c8ac6c" />
    </svg>
    <div className="flex gap-1">
      <TaskButton>
        <path d="M6 7c0-4 6-5 10-3 4-2 11-1 12 3z" fill="#7cdcf8" stroke="#18a8e0" />
      </TaskButton>
      <TaskButton>
        <ellipse cx="18" cy="9" rx="9" ry="5" fill="#e0503a" />
      </TaskButton>
      <TaskButton>
        <path d="M7 5l19-2v4H7z" fill="#8c2440" />
      </TaskButton>
      <TaskButton>
        <path d="M3 3h30v4H3z" fill="#1c4cc8" />
        <path d="M12 2h12v5H12z" fill="#e9eefc" />
        <path d="M18 3h3v4h-3z" fill="#1c4cc8" />
      </TaskButton>
    </div>
    <div className="flex-1" />
    <div className="w-3 border border-[#a59a98] bg-[#6d6160]" />
  </div>
);

export default function App() {
  return (
    <div className="flex h-screen flex-col overflow-hidden bg-white px-2 pt-2 font-['Roboto','Noto_Sans',sans-serif]">
      <Gradients />
      <TitleBar />
      <MenuBar />

      <main className="flex min-h-0 flex-1 border-t border-[#9a9a9a]">
        <div className="flex w-[25px] shrink-0 flex-col overflow-hidden border-r border-[#9c9c9c] bg-[#f0f0f0]">
          <div className="h-[11px] shrink-0 bg-linear-to-b from-white to-[#e6ebf6]" />
          <VerticalBar items={createBar} tallGrip />
          <div className="h-px shrink-0 bg-white" />
          <VerticalBar items={standardBar} flush />
        </div>
        <div className="flex w-[27px] shrink-0 flex-col overflow-hidden border-x border-l-white border-r-[#9c9c9c] bg-[#d3d9ec]">
          <div className="h-2.5 shrink-0 bg-linear-to-b from-white to-[#e6ebf6]" />
          <div className="h-[163px] shrink-0 border-b border-[#9c9c9c]" />
          <div className="h-0.5 shrink-0 bg-white" />
          <VerticalBar items={detailBar} />
          <div className="h-px shrink-0 bg-white" />
          <VerticalBar items={pointsBar} />
          <div className="h-[5px] shrink-0 border-b border-[#9c9c9c] bg-white" />
          <VerticalBar items={viewsBar} />
          <div className="flex-1 border-t border-white bg-linear-to-b from-[#d3d9ec] from-80% to-[#e2e7f5]" />
        </div>
        <section
          aria-label="Модель"
          className="mr-0.5 flex-1 border-t border-l-2 border-[#6c6c6c] bg-[#ababab]"
        />
      </main>

      <div className="flex h-[27px] shrink-0 border-t border-b border-t-[#e8e8e8] border-b-[#8f9497] bg-[#f0f0f0]">
        <div role="toolbar" className="flex shrink-0 items-center pr-px">
          <GripColumn />
          {selectionSwitches.map(([name, label, on]) => (
            <Toggle key={name} name={name} label={label} on={on} dashed />
          ))}
          <BarRule />
          {levelSwitches.map(([name, label, on]) => (
            <Toggle key={name} name={name} label={label} on={on} dashed />
          ))}
          <BarRule />
          <Combo label="Фильтр выбора" value="standard" width="w-[110px]" />
          <Toggle name="filter" label="Фильтр" on={false} dashed />
        </div>
        <div role="toolbar" className="flex shrink-0 items-center border-r border-l border-[#9a9a9a]">
          <GripColumn />
          {snapSwitches.map(([name, label, on]) => (
            <Toggle key={name} name={name} label={label} on={on} />
          ))}
          <BarRule />
          <Toggle name="snapNear" label="К ближайшим" on={false} />
          <Toggle name="snapLine" label="К линиям" on={false} />
          <BarRule />
          <Toggle name="snapGeom" label="К геометрии" />
          <Toggle name="snapRef" label="К опорным линиям" />
          <BarRule />
          <Combo label="Плоскость" value="Авто" width="w-[85px]" />
          <Combo label="Тип плоскости" value="Плоскость вида" width="w-[131px]" />
          <Combo label="Контур" value="Плоскости контура" width="w-[161px]" />
        </div>
        <div className="flex-1 bg-linear-to-b from-white to-[#d3d9ec] to-45%" />
      </div>
      <div className="h-[3px] shrink-0 border-y border-t-white border-b-[#9a9f9c] bg-white" />
      <StatusBar />
      <div className="h-px shrink-0 bg-white" />
      <Taskbar />
    </div>
  );
}
